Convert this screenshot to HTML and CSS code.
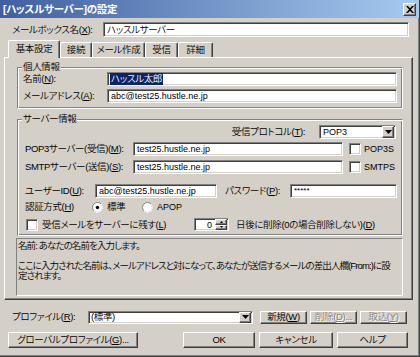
FILE: index.html
```html
<!DOCTYPE html>
<html lang="ja">
  <head>
    <meta charset="UTF-8" />
    <title>[ハッスルサーバー]の設定</title>
    <link rel="stylesheet" href="styles.css">
  </head>
  <body>
    <div class="window">
      <div class="titleBar">
        <span>[ハッスルサーバー]の設定</span>
        <span class="closeButton raised">
          <svg width="8" height="7" viewBox="0 0 8 7"><path d="M0 0h2l2 2.2L6 0h2L5 3.5 8 7H6L4 4.8 2 7H0l3-3.5z" fill="#000" /></svg>
        </span>
      </div>

      <div class="content">
        <div class="mailboxRow">
          <span class="mailboxLabel">メールボックス名(<u>X</u>):</span>
          <span class="field mailboxField">ハッスルサーバー</span>
        </div>

        <div class="tabs">
          <span class="tab tab1 active">基本設定</span>
          <span class="tab tab2">接続</span>
          <span class="tab tab3">メール作成</span>
          <span class="tab tab4">受信</span>
          <span class="tab tab5">詳細</span>
        </div>

        <div class="panel">
          <div class="group personalGroup">
            <span class="groupTitle">個人情報</span>
            <div class="row">
              <span class="nameLabel">名前(<u>N</u>):</span>
              <span class="field personalField"><span class="selected">ハッスル太郎</span></span>
            </div>
            <div class="row addressRow">
              <span class="nameLabel">メールアドレス(<u>A</u>):</span>
              <span class="field personalField latin">abc@test25.hustle.ne.jp</span>
            </div>
          </div>

          <div class="group serverGroup">
            <span class="groupTitle">サーバー情報</span>
            <div class="row protocolRow">
              <span class="protocolLabel">受信プロトコル(<u>T</u>):</span>
              <span class="field combo protocolCombo">
                <span class="comboText latin">POP3</span>
                <span class="dropButton raised"><svg width="7" height="4" viewBox="0 0 7 4"><path d="M0 0h7L3.5 4z" fill="#000" /></svg></span>
              </span>
            </div>
            <div class="row serverRow pop3Row">
              <span class="serverLabel">POP3サーバー(受信)(<u>M</u>):</span>
              <span class="field serverField latin">test25.hustle.ne.jp</span>
              <span class="checkbox"></span>
              <span class="checkText">POP3S</span>
            </div>
            <div class="row serverRow smtpRow">
              <span class="serverLabel">SMTPサーバー(送信)(<u>S</u>):</span>
              <span class="field serverField latin">test25.hustle.ne.jp</span>
              <span class="checkbox"></span>
              <span class="checkText">SMTPS</span>
            </div>
            <div class="row serverRow userRow">
              <span class="userLabel">ユーザーID(<u>U</u>):</span>
              <span class="field userField latin">abc@test25.hustle.ne.jp</span>
              <span class="passLabel">パスワード(<u>P</u>):</span>
              <span class="field passField latin">*****</span>
            </div>
            <div class="row serverRow authRow">
              <span class="authLabel">認証方式(<u>H</u>)</span>
              <span class="radioOption">
                <svg class="radio" width="11" height="11" viewBox="0 0 11 11">
                  <circle cx="5.5" cy="5.5" r="5" fill="#fff" stroke="#808080" />
                  <path d="M9.04 1.96A5 5 0 0 1 1.96 9.04" fill="none" stroke="#fff" />
                  <circle cx="5.5" cy="5.5" r="1.7" fill="#000" />
                </svg>
                <span>標準</span>
              </span>
              <span class="radioOption">
                <svg class="radio" width="11" height="11" viewBox="0 0 11 11">
                  <circle cx="5.5" cy="5.5" r="5" fill="#fff" stroke="#808080" />
                  <path d="M9.04 1.96A5 5 0 0 1 1.96 9.04" fill="none" stroke="#fff" />
                </svg>
                <span class="latin">APOP</span>
              </span>
            </div>
            <div class="row serverRow keepRow">
              <span class="checkbox keepCheck"></span>
              <span class="keepLabel">受信メールをサーバーに残す(<u>L</u>)</span>
              <span class="field spinField">
                <span class="spinText latin">0</span>
                <span class="spinButtons">
                  <span class="spinButton raised"><svg width="3" height="2" viewBox="0 0 3 2"><path d="M1.5 0L3 2H0z" fill="#000" /></svg></span>
                  <span class="spinButton raised"><svg width="3" height="2" viewBox="0 0 3 2"><path d="M0 0h3L1.5 2z" fill="#000" /></svg></span>
                </span>
              </span>
              <span class="daysLabel">日後に削除(0の場合削除しない)(<u>D</u>)</span>
            </div>
          </div>

          <div class="helpBox">
            <div>名前: あなたの名前を入力します。</div>
            <div>&nbsp;</div>
            <div>ここに入力された名前は、メールアドレスと対になって、あなたが送信するメールの差出人欄(From:)に設</div>
            <div>定されます。</div>
          </div>
        </div>

        <div class="profileRow">
          <span class="profileLabel">プロファイル(<u>R</u>):</span>
          <span class="field combo profileCombo">
            <span class="comboText">(標準)</span>
            <span class="dropButton raised"><svg width="7" height="4" viewBox="0 0 7 4"><path d="M0 0h7L3.5 4z" fill="#000" /></svg></span>
          </span>
          <span class="button raised smallButton newButton">新規(<u>W</u>)</span>
          <span class="button raised smallButton disabled">削除(<u>D</u>)...</span>
          <span class="button raised smallButton disabled">取込(<u>Y</u>)</span>
        </div>

        <div class="buttonRow">
          <span class="button raised globalButton">グローバルプロファイル(<u>G</u>)...</span>
          <span class="button raised okButton">OK</span>
          <span class="button raised cancelButton">キャンセル</span>
          <span class="button raised helpButton">ヘルプ</span>
        </div>
      </div>
    </div>
  </body>
</html>
```

FILE: styles.css
```css
* {
  box-sizing: border-box;
}

body {
  margin: 0;
  background: #d4d0c8;
  font-family: "Liberation Sans", "Noto Sans CJK JP", sans-serif;
  font-size: 9.5px;
  font-weight: 350;
  line-height: 12px;
  letter-spacing: -0.35px;
  font-feature-settings: "palt";
  color: #000;
}

u {
  text-underline-offset: 1px;
}

.window {
  width: 420px;
  height: 357px;
  background: #d4d0c8;
  border-right: 1px solid #404040;
  border-bottom: 1px solid #404040;
  box-shadow: inset -1px -1px #808080;
  overflow: hidden;
}

/* classic 3d edges */
.raised {
  background: #d4d0c8;
  border: 1px solid;
  border-color: #fff #404040 #404040 #fff;
  box-shadow: inset -1px -1px #808080;
}

.field {
  display: flex;
  align-items: center;
  background: #fff;
  border: 1px solid;
  border-color: #808080 #fff #fff #808080;
  box-shadow: inset 1px 1px #404040, inset -1px -1px #d4d0c8;
  padding-left: 3px;
  white-space: nowrap;
  overflow: hidden;
}

.latin {
  font-size: 9px;
  letter-spacing: 0;
}

.titleBar {
  height: 18px;
  display: flex;
  align-items: center;
  justify-content: space-between;
  padding: 0 3px 0 3px;
  background: linear-gradient(to right, #3f5f9f, #a6caf0);
  color: #fff;
  font-weight: bold;
  font-size: 10.5px;
  letter-spacing: -0.3px;
}

.closeButton {
  width: 13px;
  height: 13px;
  display: flex;
  align-items: center;
  justify-content: center;
}

.content {
  padding: 4px 6px 0 4px;
}

.mailboxRow {
  display: flex;
  align-items: center;
  height: 15px;
  padding-left: 8px;
}
.mailboxLabel {
  width: 91px;
}
.mailboxField {
  width: 306px;
  height: 15px;
}

/* tabs */
.tabs {
  display: flex;
  align-items: flex-end;
  height: 18px;
  margin-top: 3px;
  margin-bottom: -1px;
  padding-left: 4px;
  position: relative;
  z-index: 1;
}
.tab {
  height: 15px;
  margin-bottom: 1px;
  display: flex;
  align-items: center;
  justify-content: center;
  border-top: 1px solid #fff;
  border-left: 1px solid #fff;
  border-right: 1px solid #404040;
  box-shadow: inset -1px 0 #808080;
  border-radius: 2px 2px 0 0;
  background: #d4d0c8;
}
.tab.active {
  height: 18px;
  margin-bottom: 0;
  padding-bottom: 2px;
}
.tab1 { width: 52px; }
.tab2 { width: 32px; }
.tab3 { width: 53px; }
.tab4 { width: 33px; }
.tab5 { width: 35px; }

.panel {
  height: 243px;
  border: 1px solid;
  border-color: #fff #404040 #404040 #fff;
  box-shadow: inset -1px -1px #808080;
  padding: 9px 9px 0 12px;
}

/* etched group boxes */
.group {
  width: 386px;
  display: flex;
  flex-direction: column;
  border: 1px solid;
  border-color: #808080 #fff #fff #808080;
  box-shadow: inset 1px 1px #fff, inset -1px -1px #808080;
}
.groupTitle {
  align-self: flex-start;
  height: 11px;
  line-height: 11px;
  margin: -7px 0 0 4px;
  padding: 0 1px;
  background: #d4d0c8;
}
.personalGroup {
  padding-bottom: 5px;
}
.serverGroup {
  margin-top: 10px;
  padding-bottom: 4px;
}

.row {
  display: flex;
  align-items: center;
  height: 14px;
  padding-left: 5px;
  white-space: nowrap;
}
.row .field {
  height: 14px;
}
.addressRow {
  margin-top: 3px;
}
.nameLabel {
  width: 84px;
}
.personalField {
  width: 290px;
}
.selected {
  background: #0a246a;
  color: #fff;
  padding: 0 1px;
  margin-left: -1px;
}

.protocolRow {
  margin-top: 1px;
  justify-content: flex-end;
  padding-right: 6px;
}
.protocolLabel {
  margin-right: 14px;
}
.combo {
  padding-right: 1px;
}
.comboText {
  flex: 1;
}
.dropButton {
  width: 12px;
  height: 100%;
  display: flex;
  align-items: center;
  justify-content: center;
}
.protocolCombo {
  width: 77px;
}

.serverRow {
  padding-left: 7px;
}
.pop3Row {
  margin-top: 3px;
}
.smtpRow {
  margin-top: 4px;
}
.serverLabel {
  width: 108px;
}
.serverField {
  width: 210px;
}
.checkbox {
  width: 12px;
  height: 12px;
  margin-left: 6px;
  background: #fff;
  border: 1px solid;
  border-color: #808080 #fff #fff #808080;
  box-shadow: inset 1px 1px #404040, inset -1px -1px #d4d0c8;
}
.checkText {
  margin-left: 3px;
  font-size: 9px;
  letter-spacing: 0;
}

.userRow {
  margin-top: 10px;
}
.userLabel {
  width: 70px;
}
.userField {
  width: 122px;
}
.passLabel {
  width: 65px;
  margin-left: 8px;
}
.passField {
  width: 107px;
  font-size: 8px;
}

.authRow {
  margin-top: 2px;
}
.authLabel {
  width: 67px;
}
.radioOption {
  width: 50px;
  display: flex;
  align-items: center;
  gap: 4px;
}

.keepRow {
  margin-top: 4px;
  height: 13px;
}
.keepCheck {
  margin-left: 1px;
}
.keepLabel {
  width: 152px;
  margin-left: 4px;
}
.row .spinField {
  width: 35px;
  height: 13px;
  padding-right: 1px;
}
.spinText {
  flex: 1;
  text-align: right;
  padding-right: 3px;
}
.spinButtons {
  width: 12px;
  height: 11px;
  display: flex;
  flex-direction: column;
}
.spinButton {
  flex: 1;
  display: flex;
  align-items: center;
  justify-content: center;
}
.daysLabel {
  margin-left: 7px;
}

.helpBox {
  height: 58px;
  margin-top: 2px;
  width: 387px;
  margin-left: -1px;
  border: 1px solid;
  border-color: #808080 #fff #fff #808080;
  padding: 2px 1px;
  line-height: 10px;
  white-space: nowrap;
  overflow: hidden;
  letter-spacing: -0.9px;
}

/* bottom area */
.profileRow {
  display: flex;
  align-items: center;
  height: 14px;
  margin-top: 10px;
  padding-left: 8px;
}
.profileLabel {
  width: 76px;
}
.profileCombo {
  width: 165px;
  height: 13px;
  padding-left: 2px;
}
.button {
  display: flex;
  align-items: center;
  justify-content: center;
  white-space: nowrap;
}
.smallButton {
  width: 47px;
  height: 13px;
  margin-left: 3px;
}
.newButton {
  margin-left: 7px;
}
.disabled {
  color: #808080;
  text-shadow: 1px 1px #fff;
}

.buttonRow {
  display: flex;
  align-items: center;
  height: 16px;
  margin-top: 8px;
  padding-left: 4px;
  gap: 4px;
}
.buttonRow .button {
  height: 16px;
}
.globalButton {
  width: 130px;
}
.okButton {
  width: 72px;
  margin-left: 41px;
}
.cancelButton {
  width: 74px;
}
.helpButton {
  width: 71px;
}
```
